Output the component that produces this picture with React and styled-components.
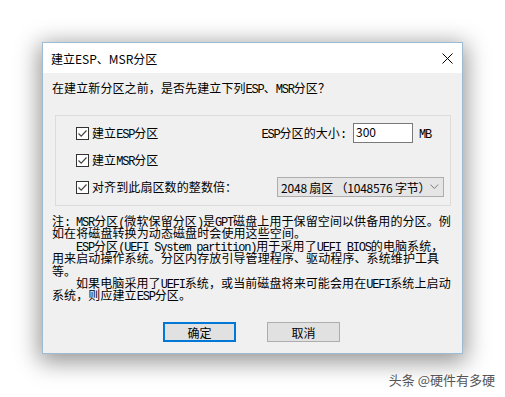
import React from 'react'
import styled, { createGlobalStyle } from 'styled-components'

const GlobalStyle = createGlobalStyle`
  body {
    margin: 0;
    background: #fff;
    font-family: "Noto Sans CJK SC", sans-serif;
  }
`

const Page = styled.div`
  height: 397px;
  box-sizing: border-box;
  padding: 42px 0 0 42px;
  display: flex;
  flex-direction: column;
  align-items: flex-start;
  overflow: hidden;
`

const Dialog = styled.div`
  width: 421px;
  height: 312px;
  box-sizing: border-box;
  border: 1px solid #9dbbd2;
  background: #f0f0f0;
  box-shadow: 0 5px 22px 3px rgba(0, 0, 0, 0.42);
  display: flex;
  flex-direction: column;
`

const TitleBar = styled.div`
  height: 30px;
  background: #fff;
  display: flex;
  align-items: center;
  justify-content: space-between;
  padding-left: 8px;
`

const Title = styled.span`
  font-size: 12px;
  color: #000;
`

const Close = styled.div`
  width: 30px;
  height: 30px;
  display: flex;
  align-items: center;
  justify-content: center;
`

const Content = styled.div`
  flex: 1;
  display: flex;
  flex-direction: column;
  padding: 8px 11px 11px 9px;
`

// SimSun-like text: CJK at 12px, latin as narrow mono
const SimBlock = styled.div`
  font-size: 12px;
  line-height: ${({ h }) => h || '14px'};
  height: ${({ h }) => h || '14px'};
  letter-spacing: 0.1px;
  color: #000;
  white-space: pre;
`

const Latin = styled.span`
  font-family: "Liberation Mono", monospace;
  font-size: 12px;
  line-height: 10px;
  letter-spacing: -1.2px;
`

const Sim = ({ text }) =>
  text
    .split(/([\x20-\x7e]+)/)
    .filter(Boolean)
    .map((part, i) =>
      /[\x20-\x7e]/.test(part) ? <Latin key={i}>{part}</Latin> : part
    )

const Group = styled.div`
  margin: 20px 0 0 3px;
  border: 1px solid #dcdcdc;
  padding: 7px 6px 8px 20px;
  display: flex;
  flex-direction: column;
  gap: 7px;
`

const Row = styled.div`
  height: 20px;
  display: flex;
  align-items: center;
  justify-content: space-between;
`

const CheckLabel = styled.label`
  display: flex;
  align-items: center;
  gap: 3px;
`

const Box = styled.span`
  width: 13px;
  height: 13px;
  box-sizing: border-box;
  border: 1px solid #333;
  background: #fff;
  display: flex;
  align-items: center;
  justify-content: center;
`

const SizeField = styled.div`
  display: flex;
  align-items: center;
  margin-right: 13px;
`

const Input = styled.div`
  width: 60px;
  height: 20px;
  box-sizing: border-box;
  margin: 0 6px 0 7px;
  border: 1px solid #7a7a7a;
  background: #fff;
  font-size: 12px;
  line-height: 14px;
  padding: 1px 2px;
`

const Select = styled.div`
  width: 167px;
  height: 20px;
  box-sizing: border-box;
  border: 1px solid #adadad;
  background: #e5e5e5;
  font-size: 12px;
  display: flex;
  align-items: center;
  padding: 0 4px 0 3px;
  white-space: nowrap;
  overflow: hidden;
`

const SelectText = styled.span`
  flex: 1;
  letter-spacing: -0.2px;
`

const Note = styled.div`
  margin-top: 9px;
`

const Buttons = styled.div`
  margin-top: auto;
  display: flex;
  justify-content: center;
  gap: 31px;
`

const Button = styled.div`
  width: 73px;
  height: 20px;
  box-sizing: border-box;
  background: #e1e1e1;
  border: ${({ primary }) => (primary ? '2px solid #0078d7' : '1px solid #adadad')};
  font-size: 12px;
  display: flex;
  align-items: center;
  justify-content: center;
`

const Watermark = styled.div`
  align-self: flex-end;
  margin: 18px 10px 0 0;
  font-size: 13px;
  line-height: 16px;
  color: #555;
  text-shadow: 0 0 2px #fff;
`

const Check = () => (
  <Box>
    <svg width='11' height='11' viewBox='0 0 11 11'>
      <path d='M1.5 5.5 L4.2 8.2 L9.5 2.5' fill='none' stroke='#444' strokeWidth='1.2' />
    </svg>
  </Box>
)

const noteLines = [
  '注: MSR分区(微软保留分区)是GPT磁盘上用于保留空间以供备用的分区。例',
  '如在将磁盘转换为动态磁盘时会使用这些空间。',
  '    ESP分区(UEFI System partition)用于采用了UEFI BIOS的电脑系统，',
  '用来启动操作系统。分区内存放引导管理程序、驱动程序、系统维护工具',
  '等。',
  '    如果电脑采用了UEFI系统，或当前磁盘将来可能会用在UEFI系统上启动',
  '系统，则应建立ESP分区。'
]

export default function App () {
  return (
    <Page>
      <GlobalStyle />
      <Dialog>
        <TitleBar>
          <Title>建立ESP、MSR分区</Title>
          <Close>
            <svg width='11' height='11' viewBox='0 0 11 11'>
              <path d='M0.5 0.5 L10.5 10.5 M10.5 0.5 L0.5 10.5' stroke='#000' strokeWidth='1' />
            </svg>
          </Close>
        </TitleBar>
        <Content>
          <SimBlock>
            <Sim text='在建立新分区之前，是否先建立下列ESP、MSR分区？' />
          </SimBlock>
          <Group>
            <Row>
              <CheckLabel>
                <Check />
                <SimBlock><Sim text='建立ESP分区' /></SimBlock>
              </CheckLabel>
              <SizeField>
                <SimBlock><Sim text='ESP分区的大小:' /></SimBlock>
                <Input>300</Input>
                <SimBlock><Sim text='MB' /></SimBlock>
              </SizeField>
            </Row>
            <Row>
              <CheckLabel>
                <Check />
                <SimBlock><Sim text='建立MSR分区' /></SimBlock>
              </CheckLabel>
            </Row>
            <Row>
              <CheckLabel>
                <Check />
                <SimBlock><Sim text='对齐到此扇区数的整数倍：' /></SimBlock>
              </CheckLabel>
              <Select>
                <SelectText>2048 扇区 （1048576 字节）</SelectText>
                <svg width='9' height='6' viewBox='0 0 9 6'>
                  <path d='M0.5 0.5 L4.5 4.5 L8.5 0.5' fill='none' stroke='#777' strokeWidth='1' />
                </svg>
              </Select>
            </Row>
          </Group>
          <Note>
            {noteLines.map((line, i) => (
              <SimBlock key={i} h='12.4px'>
                <Sim text={line} />
              </SimBlock>
            ))}
          </Note>
          <Buttons>
            <Button primary>确定</Button>
            <Button>取消</Button>
          </Buttons>
        </Content>
      </Dialog>
      <Watermark>头条 @硬件有多硬</Watermark>
    </Page>
  )
}
